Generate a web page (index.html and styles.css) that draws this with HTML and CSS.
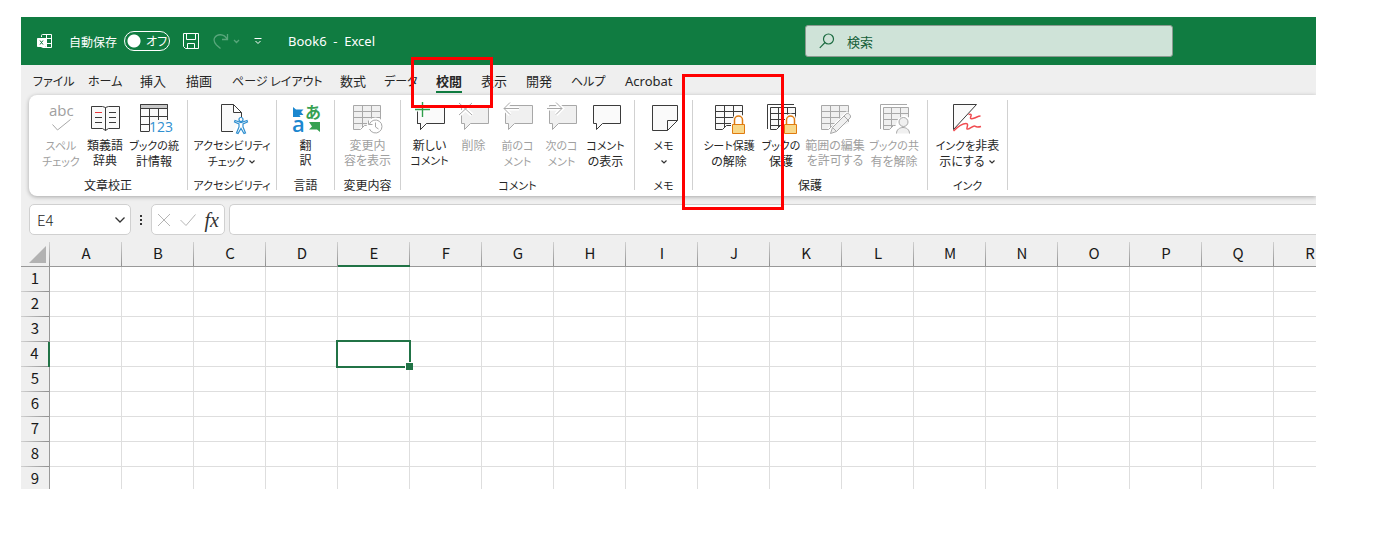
FILE: index.html
```html
<!DOCTYPE html>
<html lang="ja">
<head>
<meta charset="utf-8">
<title>Book6 - Excel</title>
<link rel="stylesheet" href="styles.css">
</head>
<body>
<svg class="defs" aria-hidden="true">
  <defs>
    <g id="bubble"><path d="M3.5 3.5h27v18h-18l-6 6v-6h-3z"/></g>
    <g id="grid"><path d="M2.5 3.5h27v18l-6 2-12 0-4 4h-5z" stroke="none"/><path d="M29.500 20V3.500h-27v24h7l4-4H20M2.500 9.500h27M2.500 15.500h27M2.500 21.500h18M11.500 3.500v22M20.500 3.500v20" fill="none"/></g>
    <g id="grids"><path d="M2.500 27V2.500H29" fill="none"/><path d="M5.500 5.500h25v16l-8 2h-7l-4 4h-6z" stroke="none"/><path d="M30.500 20V5.500h-25v22h6l4-4h5M5.500 11.500h25M5.500 17.500h25M5.500 23.500h10M13.500 5.500v20M22.500 5.500v16" fill="none"/></g>
    <g id="lock"><path d="M18 20.500h2V17a5.500 5.500 0 0 1 11 0v3.500h2V33H18z" fill="#fff" stroke="none"/><path d="M21.500 22v-4a4 4 0 0 1 8 0v4" fill="none" stroke="#e07b10" stroke-width="1.500"/><path d="M19.500 22.500h12v9h-12z" fill="#f8d889" stroke="#e07b10"/></g>
  </defs>
</svg>
<main class="app">
  <header class="titlebar">
    <svg class="logo" viewBox="0 0 16 16" width="16" height="16" fill="none" stroke="#fff"><path d="M4.500 4V2.500a1 1 0 0 1 1-1h9v13h-9a1 1 0 0 1-1-1V13M9.500 1.500v13M4.500 5.500h10M9.500 10.500h5"/><path d="M.5 5.500h8v8h-8z" fill="#fff"/><path d="M3 7.500l3 4M6 7.500l-3 4" stroke="#107c41"/></svg>
    <label class="autosave" for="autosave">自動保存</label>
    <span class="toggle"><input id="autosave" type="checkbox" role="switch"><span class="toggle-state">オフ</span></span>
    <button class="save" aria-label="保存"><svg viewBox="0 0 16 16" width="16" height="16" fill="none" stroke="#fff"><path d="M.5.5h15v15h-13l-2-2zM3.500.5v6h9v-6M4.500 15.500v-5h7v5"/></svg></button>
    <button class="redo" aria-label="やり直し"><svg viewBox="0 0 28 16" width="28" height="16" fill="none" stroke="#58a67b" stroke-width="1.300"><path d="M14.500 1v5.500H9M14 6C11 .5 4 .5 1.500 5c-1 2.500 0 5 2 7l4 3.500M21 7l2.500 2.500L26 7"/></svg></button>
    <button class="customize" aria-label="クイック アクセス ツール バーのカスタマイズ"><svg viewBox="0 0 8 8" width="8" height="8" fill="none" stroke="#fff"><path d="M.5 1.500h7M1.500 4L4 6.500 6.500 4"/></svg></button>
    <span class="doc">Book6&nbsp; -&nbsp; Excel</span>
    <label class="search"><svg viewBox="0 0 16 16" width="16" height="16" fill="none" stroke="#1c6b41" stroke-width="1.200"><circle cx="9.500" cy="6" r="5"/><path d="M6 9.500L.8 14.800"/></svg><input type="search" placeholder="検索" aria-label="検索"></label>
  </header>

  <nav class="tabs">
    <button class="kana">ファイル</button><button class="kana">ホーム</button><button>挿入</button><button>描画</button><button class="kana">ページ レイアウト</button><button>数式</button><button class="kana">データ</button><button class="active">校閲</button><button>表示</button><button>開発</button><button class="kana">ヘルプ</button><button class="latin">Acrobat</button>
  </nav>

  <section class="ribbon">
    <div class="group proofing">
      <div class="tools">
        <button disabled><svg class="icon off" viewBox="0 0 32 32"><text class="abc" x="4" y="14">abc</text><path d="M7.500 22.500l5 5.500L25.500 17.500" fill="none"/></svg><span class="kana">スペル<br>チェック</span></button>
        <button><svg class="icon" viewBox="0 0 32 32"><path d="M2.500 4.500h11l3 1 3-1h11v22h-11l-3 2-3-2h-11zM16.500 5.500v23"/><path d="M6 15.500h7M6 20.500h7M20 10.500h7M20 15.500h7M20 20.500h7"/><path d="M6 10.500h7" stroke="#e8383d"/></svg>類義語<br>辞典</button>
        <button><svg class="icon" viewBox="0 0 32 32"><path d="M2.500 2.500h27v19h-17v8h-10z" stroke="none"/><path d="M29.500 18V2.500h-27v27h9M2.500 14.500h27M2.500 22.500h9M11.500 6v23M20.500 6v12" fill="none"/><path d="M2.500 2.500h27v4h-27z" fill="#c8c8c8"/><text class="num" x="11" y="30">123</text></svg><span class="kana">ブックの統</span><br>計情報</button>
      </div>
      <h2>文章校正</h2>
    </div>
    <div class="group access">
      <div class="tools">
        <button><svg class="icon" viewBox="0 0 32 32"><path d="M17 29.500H5.500v-27h12l8 8V15M17.500 2.500v8h8"/><g fill="#fff" stroke="#2f8fd0" stroke-width="1.200"><path d="M18.500 20l4.500 2v3l-2.500 6 1.500.5 3-5 3 5 1.500-.5-2.500-6v-3l4.500-2-.5-1.500-6 2-6-2z"/><circle cx="25" cy="17.500" r="2"/></g></svg><span class="kana">アクセシビリティ<br>チェック<svg class="chev" viewBox="0 0 8 6"><path d="M1.500 1.500L4 4l2.500-2.500"/></svg></span></button>
      </div>
      <h2 class="kana">アクセシビリティ</h2>
    </div>
    <div class="group lang">
      <div class="tools">
        <button><svg class="icon" viewBox="0 0 32 32"><text class="tr-ja" x="15" y="16">あ</text><text class="tr-a" x="2" y="30">a</text><path d="M3 5l3 2.500h7.500L11 10l2.500 3H9.500l1 2H3z" fill="#1b87cf" stroke="none"/><path d="M19 20h11v10l-3-2.500h-8l3-3z" fill="#36a152" stroke="none"/></svg>翻<br>訳</button>
      </div>
      <h2>言語</h2>
    </div>
    <div class="group changes">
      <div class="tools">
        <button disabled><svg class="icon off" viewBox="0 0 32 32"><use href="#grid"/><circle cx="24.500" cy="24.500" r="9" fill="#fff" stroke="none"/><path d="M18.500 22a6.500 6.500 0 1 1 0 5M17.500 18.500v4h4M24.500 20.500v4.500l3 2" fill="none"/></svg>変更内<br>容を表示</button>
      </div>
      <h2>変更内容</h2>
    </div>
    <div class="group comments">
      <div class="tools">
        <button><svg class="icon" viewBox="0 0 32 32"><use href="#bubble"/><path d="M8.500 0v15M1 7.500h15" stroke="#fff" stroke-width="4"/><path d="M3.500 10v11.500h3v6l6-6" fill="none"/><path d="M8.500 0v15M1 7.500h15" stroke="#2f9e4a" stroke-width="1.400"/></svg>新しい<br><span class="kana">コメント</span></button>
        <button disabled><svg class="icon off" viewBox="0 0 32 32"><use href="#bubble"/><path d="M1 1l13 12M14 1L1 13" stroke="#fff" stroke-width="4"/><path d="M1 1l13 12M14 1L1 13"/></svg>削除</button>
        <button disabled><svg class="icon off" viewBox="0 0 32 32"><use href="#bubble"/><path d="M17 6.500H2M8 .5l-6 6 6 6" fill="none" stroke="#fff" stroke-width="4"/><path d="M17 6.500H2M8 .5l-6 6 6 6" fill="none"/></svg><span class="kana">前のコ<br>メント</span></button>
        <button disabled><svg class="icon off" viewBox="0 0 32 32"><use href="#bubble"/><path d="M1 6.500h15M10 .5l6 6-6 6" fill="none" stroke="#fff" stroke-width="4"/><path d="M1 6.500h15M10 .5l6 6-6 6" fill="none"/></svg><span class="kana">次のコ<br>メント</span></button>
        <button><svg class="icon" viewBox="0 0 32 32"><use href="#bubble"/></svg><span class="kana">コメント</span><br>の表示</button>
      </div>
      <h2 class="kana">コメント</h2>
    </div>
    <div class="group memo">
      <div class="tools">
        <button><svg class="icon" viewBox="0 0 32 32"><path d="M4.500 3.500h25v15l-10 10h-15zM19.500 28.500v-10h10"/></svg><span class="kana">メモ</span><br><svg class="chev" viewBox="0 0 8 6"><path d="M1.500 1.500L4 4l2.500-2.500"/></svg></button>
      </div>
      <h2 class="kana">メモ</h2>
    </div>
    <div class="group protect">
      <div class="tools">
        <button><svg class="icon" viewBox="0 0 32 32"><use href="#grid"/><use href="#lock"/></svg><span class="kana">シート保護</span><br>の解除</button>
        <button><svg class="icon" viewBox="0 0 32 32"><use href="#grids"/><use href="#lock"/></svg><span class="kana">ブックの</span><br>保護</button>
        <button disabled><svg class="icon off" viewBox="0 0 32 32"><use href="#grid"/><path d="M10 32l3-8L28 9l5 5-15 15z" fill="#fff" stroke="none"/><path d="M11.500 31.500l2-6L27 12c2-2 6 1.500 4 4L17.500 29.500zM13.500 25.500l4 4M25 14l4 4"/></svg>範囲の編集<br>を許可する</button>
        <button disabled><svg class="icon off" viewBox="0 0 32 32"><use href="#grids"/><path d="M17 33v-8l3-8 6-4 6 3v17z" fill="#fff" stroke="none"/><circle cx="25.500" cy="20" r="4.500"/><path d="M18.500 31.500c0-8 13-8 13 0"/></svg><span class="kana">ブックの共</span><br>有を解除</button>
      </div>
      <h2>保護</h2>
    </div>
    <div class="group ink">
      <div class="tools">
        <button><svg class="icon" viewBox="0 0 32 32"><path d="M25.500 2.500h-23v25z"/><path d="M17.500 12.500c4-1 2.500 1.500 2 3s1.500 1.500 4 .5 4-2 6-2M2.500 29c4-4 8-7.500 12.500-7.500 3.500 0 0 5 1 5.500 2 1 5-3 7.500-3 1.500 0 .5 2 6.500.5" fill="none" stroke="#f04b50" stroke-width="1.500"/></svg><span class="kana">インクを</span>非表<br><span>示にする<svg class="chev" viewBox="0 0 8 6"><path d="M1.500 1.500L4 4l2.500-2.500"/></svg></span></button>
      </div>
      <h2 class="kana">インク</h2>
    </div>
  </section>

  <section class="formula">
    <div class="namebox"><input value="E4" aria-label="名前ボックス"><svg viewBox="0 0 12 8" width="12" height="8" fill="none" stroke="#333" stroke-width="1.300"><path d="M1.500 1.500L6 6l4.500-4.500"/></svg></div>
    <svg class="dots" viewBox="0 0 2 12" width="2" height="12" fill="#333"><path d="M0 1h2v2H0zM0 5h2v2H0zM0 9h2v2H0z"/></svg>
    <div class="fx">
      <button aria-label="キャンセル"><svg viewBox="0 0 14 14" width="14" height="14" fill="none" stroke="#b5b5b5"><path d="M1 1l12 12M13 1L1 13"/></svg></button>
      <button aria-label="入力"><svg viewBox="0 0 16 14" width="16" height="14" fill="none" stroke="#b5b5b5"><path d="M.5 7L6 12.500 15.500 1.500"/></svg></button>
      <button class="fn" aria-label="関数の挿入">fx</button>
    </div>
    <input class="entry" aria-label="数式バー">
  </section>

  <div class="sheet">
    <table>
      <thead><tr id="columns"><th class="corner"><svg viewBox="0 0 17 17" width="17" height="17"><path d="M17 0v17H0z" fill="#b2b2b2"/></svg></th></tr></thead>
      <tbody id="rows"></tbody>
    </table>
  </div>

  <div class="mark mark-tab"></div>
  <div class="mark mark-protect"></div>
</main>
<script src="sheet.js"></script>
</body>
</html>
```
FILE: styles.css
```css
* { box-sizing: border-box; }
body { margin: 0; background: #fff; color: #262626; font-family: "Noto Sans CJK JP", sans-serif; font-size: 12px; }
button, input { font: inherit; color: inherit; padding: 0; border: 0; background: none; }
button, h2, label, span { font-feature-settings: "palt"; }
svg { flex: none; }
.defs { position: absolute; width: 0; height: 0; }

.app { position: relative; display: flex; flex-direction: column; height: calc(100vh - 74px); margin: 17px 70px 57px 21px; overflow: hidden; background: #efefef; }

.titlebar { display: flex; align-items: center; flex: none; height: 48px; padding: 0 143px 0 16px; background: #107c41; color: #fff; }
.titlebar button { display: flex; }
.autosave { margin: 0 7px 0 16px; }
.toggle { display: grid; align-items: center; width: 46px; height: 20px; }
.toggle input { grid-area: 1 / 1; appearance: none; width: 46px; height: 20px; margin: 0; border: 1px solid #fff; border-radius: 10px; background: radial-gradient(circle at 9px 9px, #fff 6px, transparent 7px); }
.toggle-state { grid-area: 1 / 1; padding-left: 22px; line-height: 20px; pointer-events: none; }
.save { margin-left: 13px; }
.redo { margin-left: 14px; }
.customize { margin-left: 13px; }
.doc { margin-left: 26px; font-family: "Noto Sans", sans-serif; font-size: 13px; white-space: nowrap; }
.search { display: flex; align-items: center; gap: 12px; width: 368px; height: 32px; margin-left: auto; padding-left: 13px; border: 1px solid #8a9a90; border-radius: 3px; background: #cfe3d8; color: #155f38; font-size: 13px; }
.search input { flex: 1; min-width: 0; outline: 0; }
.search input::placeholder { color: #155f38; opacity: 1; }

.tabs { display: grid; grid-template-columns: 55px 52px 46px 46px 108px 44px 52px 45px 45px 45px 54px auto; flex: none; justify-items: start; height: 30px; padding-left: 12px; font-size: 13px; }
.tabs button { height: 27px; margin-top: 1px; padding-top: 4px; line-height: 20px; white-space: nowrap; border-bottom: 2px solid transparent; }
.tabs .kana { font-size: 12px; }
.tabs .active { font-weight: 700; border-color: #107c41; }
.tabs .latin { font-family: "Noto Sans", sans-serif; }

.ribbon { display: flex; flex: none; height: 101px; margin-left: 8px; padding: 5px 0 6px; border-radius: 8px 0 0 8px; background: #fff; box-shadow: 0 1px 4px rgba(0, 0, 0, .3); }
.ribbon .kana { font-size: 11px; }
.group { display: flex; flex-direction: column; align-items: center; justify-content: space-between; border-right: 1px solid #d1d1d1; }
.tools { display: grid; grid-auto-flow: column; justify-content: center; align-items: start; }
.tools button { display: block; justify-self: center; padding-top: 2px; line-height: 15px; text-align: center; white-space: nowrap; }
.tools button:disabled { color: #a0a0a0; }
.group h2 { height: 14px; margin: 0 0 -2px; font-size: 12px; font-weight: 400; line-height: 14px; white-space: nowrap; }
.proofing { width: 159px; }
.proofing .tools { grid-template-columns: 44px 44px 54px; padding-left: 4px; }
.access { width: 89px; }
.lang { width: 58px; }
.changes { width: 66px; }
.comments { width: 234px; }
.comments .tools { grid-template-columns: repeat(5, 44px); }
.memo { width: 58px; }
.protect { width: 235px; }
.protect .tools { grid-template-columns: 64px 40px 68px 50px; margin-left: -4px; }
.ink { width: 80px; }
.icon { display: block; width: 32px; height: 32px; margin: 0 auto 3px; fill: #fafafa; stroke: #3b3b3b; overflow: visible; }
.icon.off { fill: #f0f0f0; stroke: #a8a8a8; }
.icon text { stroke: none; }
.abc { font: 15px "Open Sans", sans-serif; fill: #a0a0a0; }
.num { font: 15px "Open Sans", sans-serif; font-size: 14px; fill: #2f8fd0; }
.tr-ja { font: 700 16px "Noto Sans CJK JP", sans-serif; fill: #36a152; }
.tr-a { font: 600 22px "Open Sans", sans-serif; fill: #1b87cf; }
.chev { width: 8px; height: 6px; margin-left: 3px; vertical-align: 1px; fill: none; stroke: #333; stroke-width: 1.2; }
.memo .chev { margin-left: 0; }

.formula { display: flex; flex: none; align-items: center; height: 31px; margin: 8px 0 7px 8px; }
.namebox, .fx, .entry { height: 31px; border: 1px solid #d0d0d0; border-radius: 5px; background: #fff; }
.namebox { display: flex; align-items: center; width: 102px; padding: 0 4px 0 7px; font-size: 15px; }
.namebox input { flex: 1; min-width: 0; font-weight: 300; }
.dots { margin: 0 9px; }
.fx { display: flex; align-items: center; width: 74px; padding: 0 5px; justify-content: space-between; }
.fx button { display: flex; }
.fx .fn { font: italic 20px "Liberation Serif", serif; line-height: 24px; color: #333; }
.entry { flex: 1; min-width: 0; margin-left: 4px; border-right: 0; border-radius: 5px 0 0 5px; }

.sheet { flex: 1; min-height: 0; overflow: hidden; }
table { width: 1325px; table-layout: fixed; border-collapse: separate; border-spacing: 0; background: #fff; }
th, td { height: 25px; padding: 0; border: solid #dedede; border-width: 0 1px 1px 0; }
th { width: 72px; font-size: 15px; font-weight: 400; line-height: 21px; vertical-align: top; color: #1a1a1a; background: #efefef; }
thead th { border-right: 0; border-bottom-color: #999; background: linear-gradient(#d0d0d0, #909090) right / 1px 100% no-repeat #efefef; }
thead th.selected { border-bottom: 2px solid #217346; }
tbody th { border-right-color: #999; border-bottom: 0; background: linear-gradient(90deg, #d0d0d0, #909090) bottom / 100% 1px no-repeat #efefef; }
tbody th.selected { border-right: 2px solid #217346; }
.corner { width: 29px; text-align: right; }
.corner svg { display: block; margin: 4px 4px 0 auto; }
td.current { position: relative; }
.cursor { position: absolute; inset: -2px; border: 2px solid #217346; }
.cursor::after { content: ""; position: absolute; right: -4px; bottom: -4px; width: 7px; height: 7px; border: solid #fff; border-width: 1px 0 0 1px; background: #217346; }

.mark { position: absolute; border: 3px solid #f00; pointer-events: none; }
.mark-tab { left: 390px; top: 40px; width: 82px; height: 51px; }
.mark-protect { left: 661px; top: 57px; width: 102px; height: 136px; }
```
FILE: sheet.js
```js
const columns = [..."ABCDEFGHIJKLMNOPQR"];
const current = { column: "E", row: 4 };
const headRow = document.getElementById("columns");
const body = document.getElementById("rows");

for (const name of columns) {
  const th = document.createElement("th");
  th.scope = "col";
  th.textContent = name;
  if (name === current.column) th.className = "selected";
  headRow.append(th);
}

for (let row = 1; row <= 9; row++) {
  const tr = document.createElement("tr");
  const th = document.createElement("th");
  th.scope = "row";
  th.textContent = row;
  if (row === current.row) th.className = "selected";
  tr.append(th);
  for (const name of columns) {
    const td = document.createElement("td");
    if (row === current.row && name === current.column) {
      td.className = "current";
      const cursor = document.createElement("div");
      cursor.className = "cursor";
      td.append(cursor);
    }
    tr.append(td);
  }
  body.append(tr);
}
```
